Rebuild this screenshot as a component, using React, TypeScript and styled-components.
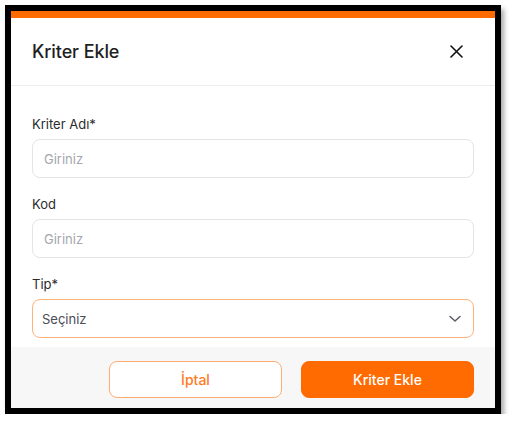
import React from "react";
import styled, { createGlobalStyle } from "styled-components";

const GlobalStyle = createGlobalStyle`
  html, body { margin: 0; padding: 0; background: #ffffff; }
  body { font-family: Inter, "Noto Sans", sans-serif; }
  * { box-sizing: border-box; }
`;

const ORANGE = "#ff6b00";

const Frame = styled.div`
  margin: 5px 0 0 5px;
  width: 496px;
  border: 6px solid #000;
  box-shadow: 3px 4px 5px rgba(0, 0, 0, 0.35);
  background: #fff;
  display: flex;
  flex-direction: column;
`;

const TopBar = styled.div`
  height: 7px;
  background: ${ORANGE};
`;

const Header = styled.div`
  height: 68px;
  padding: 0 32px 0 21px;
  display: flex;
  align-items: center;
  justify-content: space-between;
  border-bottom: 1px solid #ececec;
`;

const Title = styled.h2`
  margin: 0;
  font-size: 18px;
  font-weight: 500;
  color: #1f1f1f;
  letter-spacing: -0.1px;
`;

const CloseButton = styled.button`
  border: none;
  background: none;
  padding: 0;
  width: 14px;
  height: 14px;
  display: flex;
  align-items: center;
  justify-content: center;
  cursor: pointer;
`;

const Body = styled.div`
  padding: 30px 21px 9px;
  display: flex;
  flex-direction: column;
  gap: 18px;
`;

const Field = styled.div`
  display: flex;
  flex-direction: column;
  gap: 7px;
`;

const Label = styled.label`
  font-size: 13px;
  line-height: 16px;
  color: #2b2b2b;
  font-weight: 400;
`;

const Input = styled.input`
  height: 39px;
  width: 100%;
  border: 1px solid #e3e4e8;
  border-radius: 8px;
  padding: 0 11px;
  font-family: inherit;
  font-size: 13px;
  color: #222;
  outline: none;
  &::placeholder { color: #a3a6ad; }
`;

const SelectBox = styled.div`
  height: 39px;
  border: 1px solid #ffb27a;
  border-radius: 8px;
  padding: 0 12px 0 9px;
  display: flex;
  align-items: center;
  justify-content: space-between;
  font-size: 13px;
  color: #4a4d55;
`;

const Footer = styled.div`
  background: #f7f7f7;
  padding: 14px 21px 10px;
  display: flex;
  justify-content: flex-end;
  gap: 19px;
`;

const Button = styled.button<{ $primary?: boolean }>`
  width: 173px;
  height: 37px;
  border-radius: 8px;
  font-family: inherit;
  font-size: 14px;
  font-weight: 500;
  cursor: pointer;
  border: 1px solid ${(p) => (p.$primary ? ORANGE : "#ffab72")};
  background: ${(p) => (p.$primary ? ORANGE : "#fff")};
  color: ${(p) => (p.$primary ? "#fff" : "#ff7a1f")};
`;

export default function App() {
  return (
    <>
      <GlobalStyle />
      <Frame>
        <TopBar />
        <Header>
          <Title>Kriter Ekle</Title>
          <CloseButton aria-label="Kapat">
            <svg width="13" height="13" viewBox="0 0 13 13">
              <path d="M1 1 L12 12 M12 1 L1 12" stroke="#111" strokeWidth="1.6" strokeLinecap="round" />
            </svg>
          </CloseButton>
        </Header>
        <Body>
          <Field>
            <Label>Kriter Adı*</Label>
            <Input placeholder="Giriniz" />
          </Field>
          <Field>
            <Label>Kod</Label>
            <Input placeholder="Giriniz" />
          </Field>
          <Field>
            <Label>Tip*</Label>
            <SelectBox>
              <span>Seçiniz</span>
              <svg width="12" height="8" viewBox="0 0 12 8">
                <path d="M1 1.5 L6 6 L11 1.5" fill="none" stroke="#5a5d64" strokeWidth="1.5" strokeLinecap="round" strokeLinejoin="round" />
              </svg>
            </SelectBox>
          </Field>
        </Body>
        <Footer>
          <Button>İptal</Button>
          <Button $primary>Kriter Ekle</Button>
        </Footer>
      </Frame>
    </>
  );
}
